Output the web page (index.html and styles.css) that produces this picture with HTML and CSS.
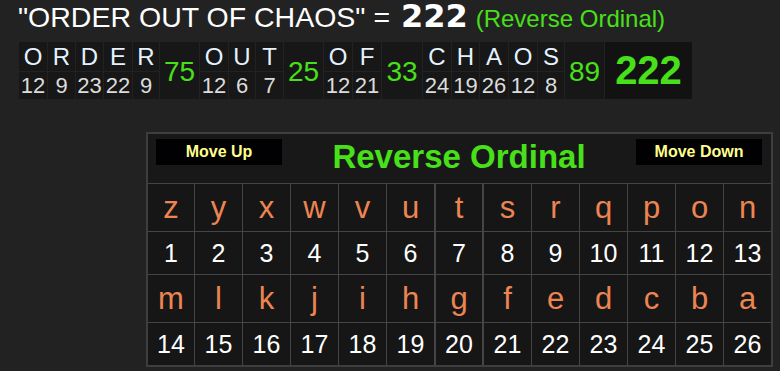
FILE: index.html
```html
<!DOCTYPE html>
<html lang="en">
<head>
<meta charset="utf-8">
<title>Order Out Of Chaos – Reverse Ordinal</title>
<link rel="stylesheet" href="styles.css">
</head>
<body>
<div class="page">
  <h1 class="phrase"><span class="quote">"ORDER OUT OF CHAOS" =</span> <span class="total">222</span> <span class="cipher">(Reverse Ordinal)</span></h1>

  <table class="breakdown">
    <tr>
      <td class="ch wide">O</td><td class="ch">R</td><td class="ch">D</td><td class="ch wide">E</td><td class="ch slim">R</td>
      <td class="sum" rowspan="2">75</td>
      <td class="ch wide">O</td><td class="ch slim">U</td><td class="ch">T</td>
      <td class="sum" rowspan="2">25</td>
      <td class="ch wide">O</td><td class="ch wide">F</td>
      <td class="sum broad" rowspan="2">33</td>
      <td class="ch wide">C</td><td class="ch">H</td><td class="ch wide">A</td><td class="ch wide">O</td><td class="ch slim">S</td>
      <td class="sum" rowspan="2">89</td>
      <td class="grand" rowspan="2">222</td>
    </tr>
    <tr>
      <td class="val">12</td><td class="val">9</td><td class="val">23</td><td class="val">22</td><td class="val">9</td>
      <td class="val">12</td><td class="val">6</td><td class="val">7</td>
      <td class="val">12</td><td class="val">21</td>
      <td class="val">24</td><td class="val">19</td><td class="val">26</td><td class="val">12</td><td class="val">8</td>
    </tr>
  </table>

  <div class="chart">
    <div class="chart-grid">
      <div class="chart-head">
        <button class="move">Move Up</button>
        <h2 class="chart-title">Reverse Ordinal</h2>
        <button class="move">Move Down</button>
      </div>

      <div class="cell letter">z</div><div class="cell letter">y</div><div class="cell letter">x</div><div class="cell letter">w</div><div class="cell letter">v</div><div class="cell letter">u</div><div class="cell letter mid">t</div><div class="cell letter">s</div><div class="cell letter">r</div><div class="cell letter">q</div><div class="cell letter">p</div><div class="cell letter">o</div><div class="cell letter">n</div>

      <div class="cell num">1</div><div class="cell num">2</div><div class="cell num">3</div><div class="cell num">4</div><div class="cell num">5</div><div class="cell num">6</div><div class="cell num mid">7</div><div class="cell num">8</div><div class="cell num">9</div><div class="cell num">10</div><div class="cell num">11</div><div class="cell num">12</div><div class="cell num">13</div>

      <div class="cell letter">m</div><div class="cell letter">l</div><div class="cell letter">k</div><div class="cell letter">j</div><div class="cell letter">i</div><div class="cell letter">h</div><div class="cell letter mid">g</div><div class="cell letter">f</div><div class="cell letter">e</div><div class="cell letter">d</div><div class="cell letter">c</div><div class="cell letter">b</div><div class="cell letter">a</div>

      <div class="cell num">14</div><div class="cell num">15</div><div class="cell num">16</div><div class="cell num">17</div><div class="cell num">18</div><div class="cell num">19</div><div class="cell num mid">20</div><div class="cell num">21</div><div class="cell num">22</div><div class="cell num">23</div><div class="cell num">24</div><div class="cell num">25</div><div class="cell num">26</div>
    </div>
  </div>
</div>
</body>
</html>
```

FILE: styles.css
```css
* { box-sizing: border-box; }

html, body {
  margin: 0;
  background: #222222;
}

body {
  font-family: "Liberation Sans", Arial, sans-serif;
  color: #ffffff;
}

.page {
  width: 780px;
  height: 371px;
  overflow: hidden;
}

/* ---- phrase headline ---- */
.phrase {
  margin: 0;
  padding-left: 18px;
  height: 32px;
  line-height: 32px;
  font-weight: normal;
  font-size: 28.5px;
  white-space: nowrap;
}

.phrase .total {
  display: inline-block;
  margin-left: 3px;
  font-family: "DejaVu Sans", Verdana, sans-serif;
  font-weight: bold;
  font-size: 32px;
  line-height: 32px;
}

.phrase .cipher {
  font-size: 24px;
  color: #48e01a;
}

/* ---- letter by letter breakdown ---- */
.breakdown {
  margin: 9px 0 0 18px;
  border-collapse: separate;
  border-spacing: 1px;
  table-layout: auto;
}

.breakdown td {
  padding: 0;
  text-align: center;
  background: #171717;
}

.breakdown .ch {
  width: 27px;
  height: 29px;
  font-size: 24px;
  line-height: 29px;
  color: #e4f2ff;
}

.breakdown .ch.wide { width: 28px; }
.breakdown .ch.slim { width: 26px; }

.breakdown .val {
  height: 27px;
  font-size: 22px;
  line-height: 27px;
  color: #dcdcdc;
}

.breakdown .sum {
  width: 39px;
  padding-top: 2px;
  font-size: 28px;
  color: #48e01a;
}

.breakdown .sum.broad { width: 40px; }

.breakdown .grand {
  width: 87px;
  font-size: 40px;
  font-weight: bold;
  color: #48e01a;
  background: #121212;
}

/* ---- cipher chart ---- */
.chart {
  margin: 32px 0 0 146px;
  width: fit-content;
  border: 2px solid #3e3e3e;
}

.chart-grid {
  display: grid;
  grid-template-columns: 46px repeat(5, 47px) 48px repeat(6, 47px);
  grid-template-rows: 49px 47px 42px 47px 42px;
  gap: 1px;
  background: #454545;
}

.chart-head {
  grid-column: 1 / -1;
  display: flex;
  justify-content: space-between;
  align-items: flex-start;
  padding: 5px 9px 0 8px;
  background: #181818;
}

.move {
  width: 126px;
  height: 26px;
  padding: 0;
  border: 0;
  background: #010104;
  color: #ffff8c;
  font-family: "Liberation Sans", Arial, sans-serif;
  font-weight: bold;
  font-size: 16px;
  line-height: 26px;
}

.chart-title {
  margin: 2px 0 0;
  font-size: 33px;
  line-height: 32px;
  font-weight: bold;
  color: #48e01a;
}

.cell {
  display: flex;
  align-items: center;
  justify-content: center;
  background: #161616;
}

.cell.mid {
  box-shadow: inset 1px 0 #454545, inset -1px 0 #454545;
}

.letter {
  font-size: 31px;
  color: #ec8552;
}

.num {
  font-size: 25px;
  color: #ffffff;
}
```
